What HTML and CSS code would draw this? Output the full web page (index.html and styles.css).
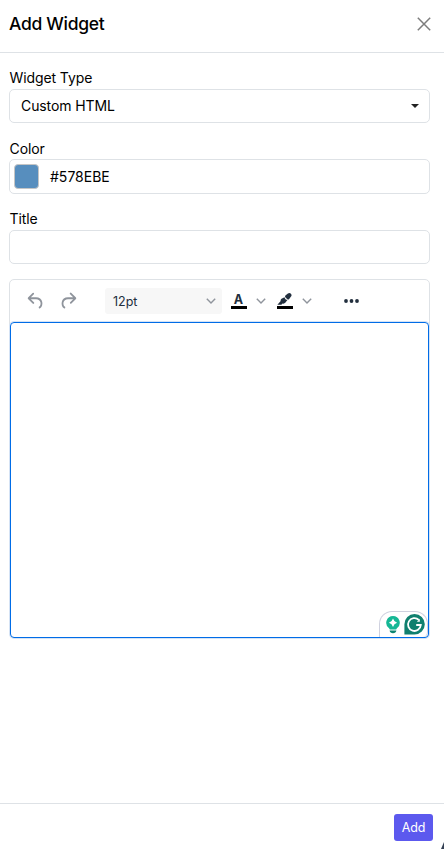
FILE: index.html
```html
<!DOCTYPE html>
<html lang="en">
<head>
    <meta charset="UTF-8">
    <meta name="viewport" content="width=device-width, initial-scale=1.0">
    <title>Add Widget</title>
    <link rel="stylesheet" href="styles.css">
</head>
<body>
    <div class="panel">
        <header class="panel-header">
            <h1 class="panel-title">Add Widget</h1>
            <button class="close-button" aria-label="Close">
                <svg width="14" height="14" viewBox="0 0 14 14"><path d="M.8.8l12.4 12.4M13.2.8L.8 13.2" fill="none" stroke="#7d7d7d" stroke-width="1.5"/></svg>
            </button>
        </header>
        <main class="panel-body">
            <div class="field">
                <div class="label">Widget Type</div>
                <div class="control select">
                    <span>Custom HTML</span>
                    <svg width="8" height="4" viewBox="0 0 8 4"><path d="M0 0h8L4 4z" fill="#222"/></svg>
                </div>
            </div>
            <div class="field field-color">
                <div class="label">Color</div>
                <div class="control color">
                    <span class="swatch"></span>
                    <span>#578EBE</span>
                </div>
            </div>
            <div class="field field-title">
                <div class="label">Title</div>
                <input class="control" type="text" aria-label="Title">
            </div>
            <div class="editor">
                <div class="toolbar">
                    <button class="tool undo" aria-label="Undo">
                        <svg width="22" height="22" viewBox="0 0 24 24"><path fill="#8f949c" d="M6.4 8H12c3.7 0 6.2 2 6.8 5.1.6 2.7-.4 5.6-2.3 6.8a1 1 0 0 1-1-1.8c1.1-.6 1.8-2.7 1.4-4.6-.5-2.1-2.1-3.5-4.9-3.5H6.4l3.3 3.3a1 1 0 1 1-1.4 1.4l-5-5a1 1 0 0 1 0-1.4l5-5a1 1 0 0 1 1.4 1.4L6.4 8Z"/></svg>
                    </button>
                    <button class="tool redo" aria-label="Redo">
                        <svg width="22" height="22" viewBox="0 0 24 24"><path fill="#8f949c" d="M17.6 10H12c-2.8 0-4.4 1.4-4.9 3.5-.4 2 .3 4 1.4 4.6a1 1 0 1 1-1 1.8c-2-1.2-2.9-4.1-2.3-6.8.6-3 3-5.1 6.8-5.1h5.6l-3.3-3.3a1 1 0 1 1 1.4-1.4l5 5a1 1 0 0 1 0 1.4l-5 5a1 1 0 0 1-1.4-1.4l3.3-3.3Z"/></svg>
                    </button>
                    <div class="font-size">
                        <span>12pt</span>
                        <svg width="10" height="6" viewBox="0 0 10 6"><path class="chevron" d="M.8.8L5 5 9.2.8"/></svg>
                    </div>
                    <button class="tool text-color" aria-label="Text color">
                        <span class="letter">A</span>
                        <span class="bar"></span>
                    </button>
                    <svg class="arrow" width="10" height="6" viewBox="0 0 10 6"><path class="chevron" d="M.8.8L5 5 9.2.8"/></svg>
                    <button class="tool highlight" aria-label="Background color">
                        <svg width="16" height="13" viewBox="0 0 16 13"><path fill="#222f3e" d="M8.700 2.200L10.900.6c1-.8 2.200-.7 3 .1.800.8.9 1.900.1 2.900L12.200 5.900c-.7.8-1.400.8-2.100.1L8.500 4.400c-.7-.7-.6-1.500.2-2.200ZM7.500 4.200c.3 1.500 1.400 2.600 2.900 2.900L8.500 9.600c-.9 1.100-2.100 1.400-3.100.9L4.400 11.700H.4l3.300-3.600c-.3-.9 0-1.700.8-2.400Z"/></svg>
                        <span class="bar"></span>
                    </button>
                    <svg class="arrow" width="10" height="6" viewBox="0 0 10 6"><path class="chevron" d="M.8.8L5 5 9.2.8"/></svg>
                    <button class="tool more" aria-label="More">
                        <svg width="15" height="4" viewBox="0 0 15 4"><g fill="#222f3e"><circle cx="2" cy="2" r="1.9"/><circle cx="7.5" cy="2" r="1.9"/><circle cx="13" cy="2" r="1.9"/></g></svg>
                    </button>
                </div>
                <div class="edit-area">
                    <div class="assistant">
                        <svg class="bulb" width="14" height="18" viewBox="0 0 14 18"><path fill="#15b795" d="M7 0a6.8 6.8 0 0 1 4.2 12.1c-.5.4-.8.9-1 1.4H3.800c-.2-.5-.5-1-1-1.400A6.800 6.800 0 0 1 7 0Z"/><path fill="#fff" d="M7 2.600q.9 3.300 4.100 4.200-3.200.9-4.100 4.200-.9-3.300-4.100-4.200 3.200-.9 4.100-4.200Z"/><path fill="#0d8571" d="M3.600 14.500h6.800c-.3 1.800-1.500 2.800-3.400 2.800s-3.100-1-3.400-2.800Z"/></svg>
                        <svg width="21" height="21" viewBox="0 0 21 21"><path fill="#10806f" d="M10.500 0a10.300 10.300 0 0 1 0 20.600H.4V10.300A10.200 10.200 0 0 1 10.500 0Z"/><path d="M14.800 5.900A6.400 6.400 0 1 0 16.800 11H12.200" fill="none" stroke="#fff" stroke-width="1.800"/><path d="M15.800 4.800v3h-3Z" fill="#fff"/></svg>
                    </div>
                </div>
            </div>
        </main>
        <footer class="panel-footer">
            <button class="add-button">Add</button>
            <span class="corner"></span>
        </footer>
    </div>
</body>
</html>
```
FILE: styles.css
```css
* {
    box-sizing: border-box;
}
body {
    margin: 0;
    background: #fff;
    color: #000;
    font-family: Inter, "Liberation Sans", sans-serif;
    font-size: 14px;
}
button {
    border: 0;
    padding: 0;
    background: none;
    font-family: inherit;
}
svg {
    display: block;
    flex: none;
}
.panel {
    display: flex;
    flex-direction: column;
    height: 849px;
    overflow: hidden;
}
.panel-header {
    display: flex;
    justify-content: space-between;
    align-items: center;
    height: 53px;
    padding: 0 13.5px 5px 9px;
    border-bottom: 1px solid #dee2e6;
}
.panel-title {
    margin: 0;
    font-size: 17.5px;
    font-weight: 500;
    letter-spacing: -0.3px;
    line-height: 24px;
}
.close-button {
    margin-top: 1px;
}
.panel-body {
    flex: 1;
    padding: 16px 14px 0 9px;
}
.field {
    margin-bottom: 15px;
}
.label {
    height: 20px;
    padding-left: 0.5px;
    letter-spacing: -0.1px;
    line-height: 18px;
}
.control {
    display: flex;
    align-items: center;
    width: 100%;
    height: 34px;
    border: 1px solid #dee2e6;
    border-radius: 5px;
    background: #fff;
}
.select {
    justify-content: space-between;
    padding: 0 10px 1px 11px;
    letter-spacing: -0.1px;
}
.field-color {
    margin-top: 16px;
}
.field-color .label {
    line-height: 19px;
}
.color {
    height: 35px;
    padding-left: 4px;
    gap: 11px;
}
.swatch {
    width: 25px;
    height: 25px;
    border: 1px solid #c5c5c5;
    border-radius: 4px;
    background: #578ebe;
}
.field-title .label {
    height: 21px;
    line-height: 19px;
}
.editor {
    height: 359px;
    border: 1px solid #dee2e6;
    border-radius: 5px;
}
.toolbar {
    display: flex;
    align-items: center;
    height: 42px;
    padding-left: 15px;
}
.undo,
.redo {
    margin-bottom: 1px;
}
.redo {
    margin-left: 10px;
}
.font-size {
    display: flex;
    justify-content: space-between;
    align-items: center;
    width: 117px;
    height: 26px;
    margin-left: 26px;
    padding: 0 6px 0 8px;
    border-radius: 3px;
    background: #f7f7f7;
    color: #222f3e;
    font-size: 12.5px;
}
.chevron {
    fill: none;
    stroke: #8f949c;
    stroke-width: 1.4;
}
.tool {
    flex: none;
}
.text-color,
.highlight {
    display: flex;
    flex-direction: column;
    align-items: center;
    width: 17px;
    height: 16px;
    justify-content: flex-end;
    margin-left: 8px;
}
.letter {
    height: 13px;
    color: #222f3e;
    font-size: 12.5px;
    font-weight: 700;
    line-height: 14px;
}
.bar {
    flex: none;
    width: 16px;
    height: 3px;
    background: #000;
}
.arrow {
    margin-left: 9px;
}
.highlight {
    margin-left: 10px;
}
.more {
    margin-left: 32px;
}
.edit-area {
    display: flex;
    justify-content: flex-end;
    align-items: flex-end;
    height: 316px;
    border: 1px solid #006ce7;
    border-radius: 4px;
    box-shadow: 0 0 0 1px #d5e3f5;
    overflow: hidden;
}
.assistant {
    display: flex;
    gap: 4px;
    width: 49px;
    height: 26px;
    padding: 2px 0 0 6px;
    border: 1px solid #cfd1df;
    border-bottom: 0;
    border-radius: 13px 13px 5px 0;
}
.bulb {
    margin-top: 2px;
}
.panel-footer {
    position: relative;
    display: flex;
    justify-content: flex-end;
    height: 46px;
    padding: 10px 11px 0 0;
    border-top: 1px solid #dee2e6;
}
.add-button {
    width: 39px;
    height: 27px;
    border-radius: 3px;
    background: #5c59ee;
    color: #fff;
    font-size: 12.5px;
    letter-spacing: -0.1px;
}
.corner {
    position: absolute;
    right: 0;
    bottom: 0;
    width: 3px;
    height: 7px;
    background: #344054;
    clip-path: polygon(100% 0, 100% 100%, 0 100%);
}
```
